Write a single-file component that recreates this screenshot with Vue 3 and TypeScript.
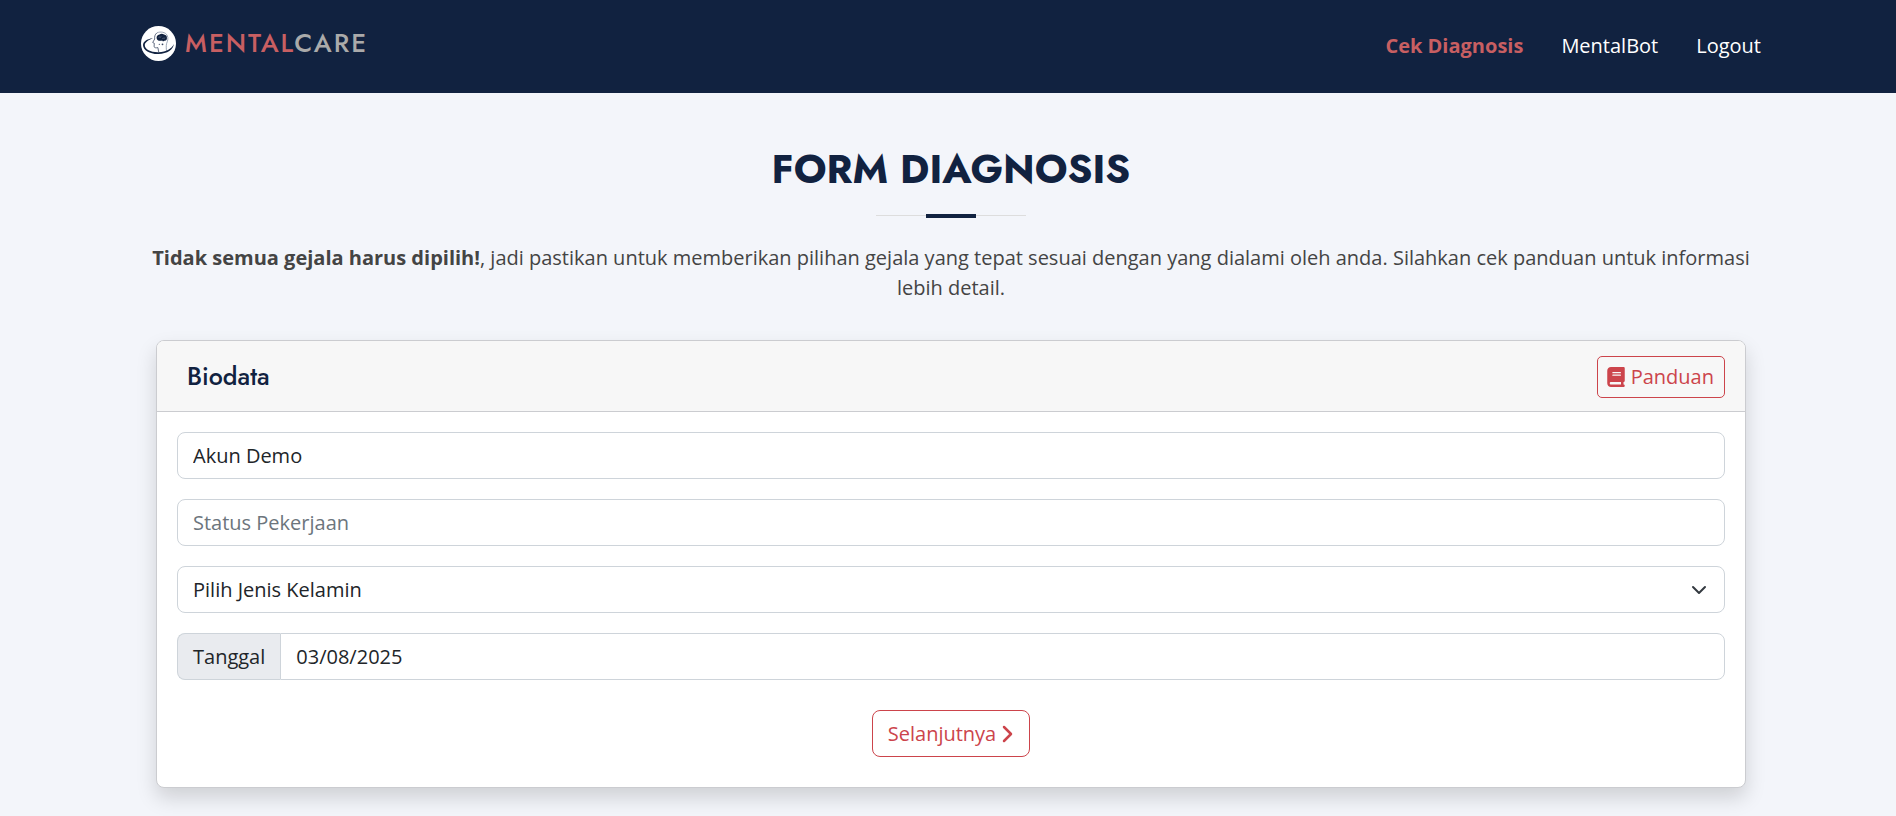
<script setup lang="ts">
import { ref } from 'vue'

const links = [
  { label: 'Cek Diagnosis', active: true },
  { label: 'MentalBot', active: false },
  { label: 'Logout', active: false },
]

const nama = ref('Akun Demo')
const pekerjaan = ref('')
const kelamin = ref('')
const tanggal = ref('03/08/2025')
</script>

<template>
  <div class="page">
    <header class="header">
      <div class="container header-row">
        <a class="brand" href="#">
          <svg class="brand-icon" viewBox="0 0 35 35" aria-hidden="true">
            <circle cx="17.5" cy="17.5" r="17.5" fill="#fff" />
            <path d="M16 6.800c-2.200 1.700-2.600 4-2.300 6.200l-2 3.500 1.600.8-.2 3c0 1.700 2 1.700 3.800 1.300l.8 4.400" fill="none" stroke="#3c4963" stroke-width=".8" />
            <path d="M16 6.800c3.400-1.500 8.600-.8 10.200 2.600 1.500 3 .3 5.600-.6 8.200-.6 2.200-.3 5-.1 7.600" fill="none" stroke="#8490a5" stroke-width=".8" />
            <path d="M15.800 12.900c-.8-1.900.5-4 2.700-4.300 1.200-1.100 3.400-1 4.500-.1 2.200.1 3.300 2 2.900 3.600.3 1.900-1.300 3.100-2.700 2.600-.7 1-1.500.7-2-.3-2.100.8-4.600.3-5.400-1.500z" fill="#112240" />
            <path d="M17.500 11.300c1-.8 2 .4 2.800-.7m1 2c.7-1 2.100.2 2.900-.9" fill="none" stroke="#8f99ab" stroke-width=".5" />
            <path d="M12 12.300C5.600 13 1.900 15.900 2 19.200c.3 5 6.800 9 15.500 8.800 8.900-.2 15-4.600 15.300-10-1.900 4.500-7.500 8-15.200 8.200C9.700 26.400 3.900 23.300 3.800 19.300c-.1-2.500 3.200-5.300 8.200-7z" fill="#112240" />
            <circle cx="21.500" cy="18.300" r=".9" fill="#3c4963" />
            <circle cx="18.300" cy="18.300" r=".6" fill="#3c4963" />
          </svg>
          <span class="brand-name"><span class="brand-accent">MENTAL</span>CARE</span>
        </a>
        <nav class="nav">
          <a v-for="link in links" :key="link.label" href="#" class="nav-link" :class="{ active: link.active }">{{ link.label }}</a>
        </nav>
      </div>
    </header>

    <main class="main">
      <div class="container">
        <div class="section-title">
          <h2>FORM DIAGNOSIS</h2>
          <div class="divider"></div>
          <p><strong>Tidak semua gejala harus dipilih!</strong>, jadi pastikan untuk memberikan pilihan gejala yang tepat sesuai dengan yang dialami oleh anda. Silahkan cek panduan untuk informasi lebih detail.</p>
        </div>

        <form class="card" @submit.prevent>
          <div class="card-header">
            <h4>Biodata</h4>
            <button type="button" class="btn btn-small">
              <svg class="book" viewBox="0 0 448 512" aria-hidden="true">
                <path fill="currentColor" d="M96 0C43 0 0 43 0 96v320c0 53 43 96 96 96h320c17.700 0 32-14.300 32-32s-14.300-32-32-32v-64c17.700 0 32-14.300 32-32V32c0-17.700-14.300-32-32-32H96zm0 384h256v64H96c-17.700 0-32-14.300-32-32s14.300-32 32-32zm32-240c0-8.800 7.200-16 16-16h192c8.800 0 16 7.200 16 16s-7.200 16-16 16H144c-8.800 0-16-7.200-16-16zm16 48h192c8.800 0 16 7.200 16 16s-7.200 16-16 16H144c-8.800 0-16-7.200-16-16s7.200-16 16-16z" />
              </svg>
              Panduan
            </button>
          </div>
          <div class="card-body">
            <input v-model="nama" class="control" type="text" aria-label="Nama" />
            <input v-model="pekerjaan" class="control" type="text" placeholder="Status Pekerjaan" aria-label="Status Pekerjaan" />
            <div class="select-wrap">
              <select v-model="kelamin" class="control" aria-label="Jenis Kelamin">
                <option value="">Pilih Jenis Kelamin</option>
                <option value="L">Laki-laki</option>
                <option value="P">Perempuan</option>
              </select>
              <svg class="chevron" viewBox="0 0 16 16" aria-hidden="true">
                <path d="m2 5 6 6 6-6" fill="none" stroke="#343a40" stroke-width="2" stroke-linecap="round" stroke-linejoin="round" />
              </svg>
            </div>
            <div class="group">
              <label class="addon" for="tanggal">Tanggal</label>
              <input id="tanggal" v-model="tanggal" class="control" type="text" />
            </div>
            <button type="submit" class="btn btn-next">
              Selanjutnya
              <svg class="next" viewBox="0 0 12 18" aria-hidden="true">
                <path d="m2 2 7 7-7 7" fill="none" stroke="currentColor" stroke-width="2.500" stroke-linecap="round" stroke-linejoin="round" />
              </svg>
            </button>
          </div>
        </form>
      </div>
    </main>
  </div>
</template>

<style>
body {
  margin: 0;
  background: #f3f5fa;
}
</style>

<style scoped>
* {
  box-sizing: border-box;
}
.page {
  min-height: 100vh;
  background: #f3f5fa;
  color: #444;
  font-family: "Open Sans", sans-serif;
  font-size: 20px;
  line-height: 30px;
}
.header {
  background: #112240;
}
.header,
.main {
  padding-left: 6px;
}
.container {
  width: 100%;
  max-width: 1650px;
  margin: 0 auto;
  padding: 0 15px;
}
.header-row {
  display: flex;
  justify-content: space-between;
  align-items: flex-start;
  padding-top: 26px;
  padding-bottom: 32px;
}
.brand {
  display: flex;
  align-items: center;
  gap: 9px;
  height: 35px;
  text-decoration: none;
}
.brand-icon {
  width: 35px;
  height: 35px;
}
.brand-name {
  color: #aaa;
  font-family: Jost, Lato, sans-serif;
  font-size: 26px;
  font-weight: 500;
  line-height: 28px;
  padding-bottom: 2px;
  letter-spacing: 2px;
}
.brand-accent {
  color: #c85f62;
}
.nav {
  display: flex;
  gap: 38px;
  padding-top: 5px;
}
.nav-link {
  color: #fff;
  text-decoration: none;
}
.nav-link.active {
  color: #c85f62;
  font-weight: 700;
}
.section-title {
  padding: 52px 0 37px;
  text-align: center;
}
h2 {
  margin: 0;
  color: #112240;
  font-family: Jost, Lato, sans-serif;
  font-size: 40px;
  font-weight: 700;
  line-height: 48px;
}
.divider {
  display: flex;
  align-items: center;
  justify-content: center;
  width: 150px;
  height: 4px;
  margin: 21px auto 25px;
  background: linear-gradient(#ddd, #ddd) 0 1px / 100% 1px no-repeat;
}
.divider::after {
  content: "";
  width: 50px;
  height: 4px;
  background: #112240;
}
p {
  margin: 0;
}
.card {
  margin: 0 15px;
  border: 1px solid #cbccd0;
  border-radius: 8px;
  background: #fff;
  box-shadow: 0 10px 20px rgba(0, 0, 0, 0.15);
}
.card-header {
  display: flex;
  align-items: center;
  justify-content: space-between;
  padding: 15px 20px 13px 30px;
  border-bottom: 1px solid #cbccd0;
  border-radius: 7px 7px 0 0;
  background: #f7f7f7;
}
h4 {
  margin: 0;
  padding-bottom: 2px;
  color: #112240;
  font-family: Jost, Lato, sans-serif;
  font-size: 25px;
  font-weight: 500;
}
.btn {
  display: inline-flex;
  align-items: center;
  border: 1px solid #cc444b;
  background: transparent;
  color: #cc444b;
  font: inherit;
  cursor: pointer;
}
.btn-small {
  gap: 6px;
  padding: 5px 10px 5px 9px;
  border-radius: 5px;
}
.book {
  width: 18px;
  height: 20px;
}
.card-body {
  display: flex;
  flex-direction: column;
  gap: 20px;
  padding: 20px 20px 30px;
}
.control {
  display: block;
  width: 100%;
  height: 47px;
  padding: 7px 15px;
  border: 1px solid #ced4da;
  border-radius: 8px;
  outline: 0;
  background: #fff;
  color: #212529;
  font: inherit;
  appearance: none;
}
.control::placeholder {
  color: #6c757d;
  opacity: 1;
}
.select-wrap {
  display: grid;
  align-items: center;
}
.select-wrap > * {
  grid-area: 1 / 1;
}
.chevron {
  justify-self: end;
  width: 16px;
  height: 16px;
  margin-right: 18px;
  pointer-events: none;
}
.group {
  display: flex;
}
.addon {
  padding: 8px 15px 7px;
  border: 1px solid #ced4da;
  border-right: 0;
  border-radius: 8px 0 0 8px;
  background: #e9ebef;
  color: #212529;
}
.group .control {
  flex: 1;
  width: auto;
  border-radius: 0 8px 8px 0;
}
.btn-next {
  align-self: center;
  gap: 6px;
  height: 47px;
  margin-top: 10px;
  padding: 0 15px;
  border-radius: 8px;
}
.next {
  width: 12px;
  height: 18px;
}
</style>
